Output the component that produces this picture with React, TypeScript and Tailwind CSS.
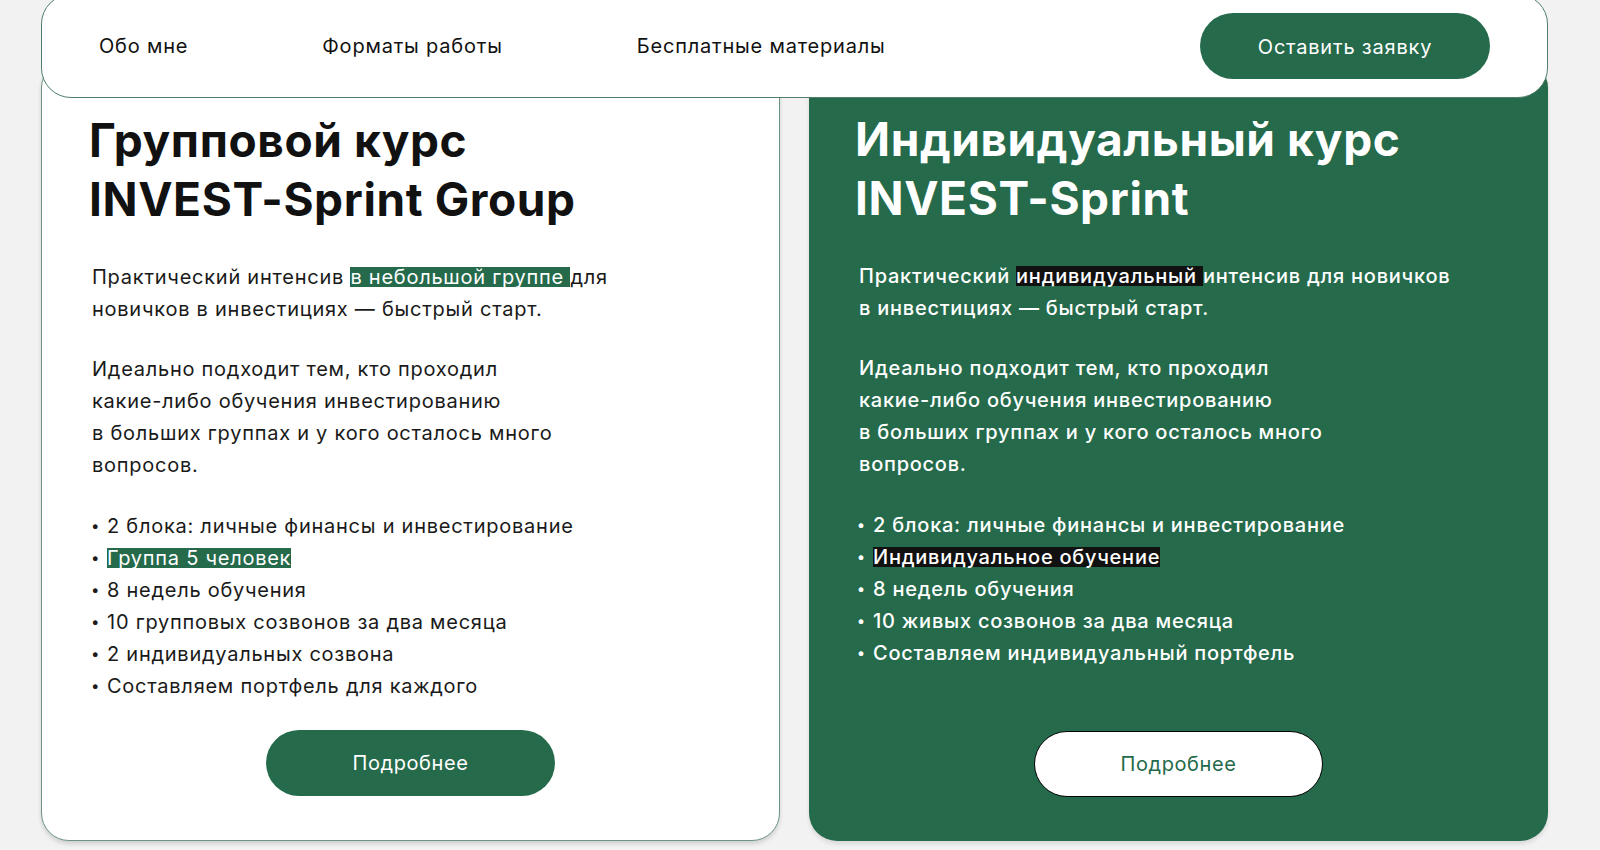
import React from "react";

const GREEN = "bg-[#256a4b]";

type Item = { text: string; mark?: boolean };

const groupItems: Item[] = [
  { text: "2 блока: личные финансы и инвестирование" },
  { text: "Группа 5 человек", mark: true },
  { text: "8 недель обучения" },
  { text: "10 групповых созвонов за два месяца" },
  { text: "2 индивидуальных созвона" },
  { text: "Составляем портфель для каждого" },
];

const soloItems: Item[] = [
  { text: "2 блока: личные финансы и инвестирование" },
  { text: "Индивидуальное обучение", mark: true },
  { text: "8 недель обучения" },
  { text: "10 живых созвонов за два месяца" },
  { text: "Составляем индивидуальный портфель" },
];

const Header: React.FC = () => (
  <header className="absolute left-[41px] top-[-6px] z-10 flex h-[104px] w-[1507px] items-center rounded-[30px] border border-[#4f7f69] bg-white pl-[57px] pr-[57px]">
    <nav className="flex items-center gap-[134px] text-[20px] tracking-[0.8px] text-[#111]">
      <a>Обо мне</a>
      <a>Форматы работы</a>
      <a>Бесплатные материалы</a>
    </nav>
    <button className={`ml-auto h-[66px] w-[290px] rounded-full ${GREEN} pt-[2px] text-[20px] tracking-[0.8px] text-white`}>
      Оставить заявку
    </button>
  </header>
);

const BulletList: React.FC<{ items: Item[]; markClass: string; textClass: string }> = ({ items, markClass, textClass }) => (
  <ul className={`mt-[29px] flex flex-col pl-[2px] text-[20px] leading-[32px] tracking-[0.75px] ${textClass}`}>
    {items.map((it) => (
      <li key={it.text} className="flex items-center whitespace-nowrap">
        <span className="w-[16px] text-[15px]">•</span>
        {it.mark ? (
          <span className={`inline-block leading-[20px] ${markClass}`}>{it.text}</span>
        ) : (
          <span>{it.text}</span>
        )}
      </li>
    ))}
  </ul>
);

export default function App() {
  return (
    <div className="relative min-h-screen overflow-hidden bg-[#f2f2f2]" style={{ fontFamily: "Inter, 'Noto Sans', sans-serif" }}>
      <Header />

      <main className="ml-[41px] flex w-[1507px] gap-[29px] pt-[60px]">
        {/* ── Group course ───────────────────────────── */}
        <section className="flex h-[781px] w-[739px] flex-col rounded-[28px] border border-[#6c9482] bg-white pl-[47px] pt-[50px] pb-[44px] shadow-[0_3px_4px_rgba(0,0,0,0.14)]">
          <h2 className="text-[46px] font-bold leading-[59px] tracking-[0.6px] text-[#111]">
            Групповой курс
            <br />
            INVEST-Sprint Group
          </h2>
          <div className="pl-[3px] text-[20px] leading-[32px] tracking-[0.75px] text-[#1a1a1a]">
            <p className="mt-[32px] whitespace-nowrap">
              Практический интенсив{" "}
              <span className={`inline-block leading-[20px] ${GREEN} text-white`}>в небольшой группе&nbsp;</span>для
              <br />
              новичков в инвестициях — быстрый старт.
            </p>
            <p className="mt-[28px] whitespace-nowrap">
              Идеально подходит тем, кто проходил
              <br />
              какие-либо обучения инвестированию
              <br />
              в больших группах и у кого осталось много
              <br />
              вопросов.
            </p>
          </div>
          <BulletList items={groupItems} markClass={`${GREEN} text-white`} textClass="text-[#1a1a1a]" />
          <div className="mt-auto flex justify-center pr-[47px]">
            <button className={`h-[66px] w-[289px] rounded-full ${GREEN} text-[20px] tracking-[0.6px] text-white`}>Подробнее</button>
          </div>
        </section>

        {/* ── Individual course ──────────────────────── */}
        <section className={`flex h-[781px] w-[739px] flex-col rounded-[28px] ${GREEN} pl-[46px] pt-[50px] pb-[44px] shadow-[0_3px_4px_rgba(0,0,0,0.1)]`}>
          <h2 className="text-[46px] font-bold leading-[59px] tracking-[0.6px] text-white">
            Индивидуальный курс
            <br />
            INVEST-Sprint
          </h2>
          <div className="pl-[4px] text-[20px] font-medium leading-[32px] tracking-[0.75px] text-white">
            <p className="mt-[32px] whitespace-nowrap">
              Практический <span className="inline-block bg-[#111] leading-[20px]">индивидуальный&nbsp;</span>интенсив для новичков
              <br />
              в инвестициях — быстрый старт.
            </p>
            <p className="mt-[28px] whitespace-nowrap">
              Идеально подходит тем, кто проходил
              <br />
              какие-либо обучения инвестированию
              <br />
              в больших группах и у кого осталось много
              <br />
              вопросов.
            </p>
          </div>
          <BulletList items={soloItems} markClass="bg-[#111]" textClass="font-medium text-white" />
          <div className="mt-auto flex justify-center pr-[46px]">
            <button className="h-[66px] w-[289px] rounded-full border border-black bg-white text-[20px] tracking-[0.6px] text-[#256a4b]">
              Подробнее
            </button>
          </div>
        </section>
      </main>
    </div>
  );
}
